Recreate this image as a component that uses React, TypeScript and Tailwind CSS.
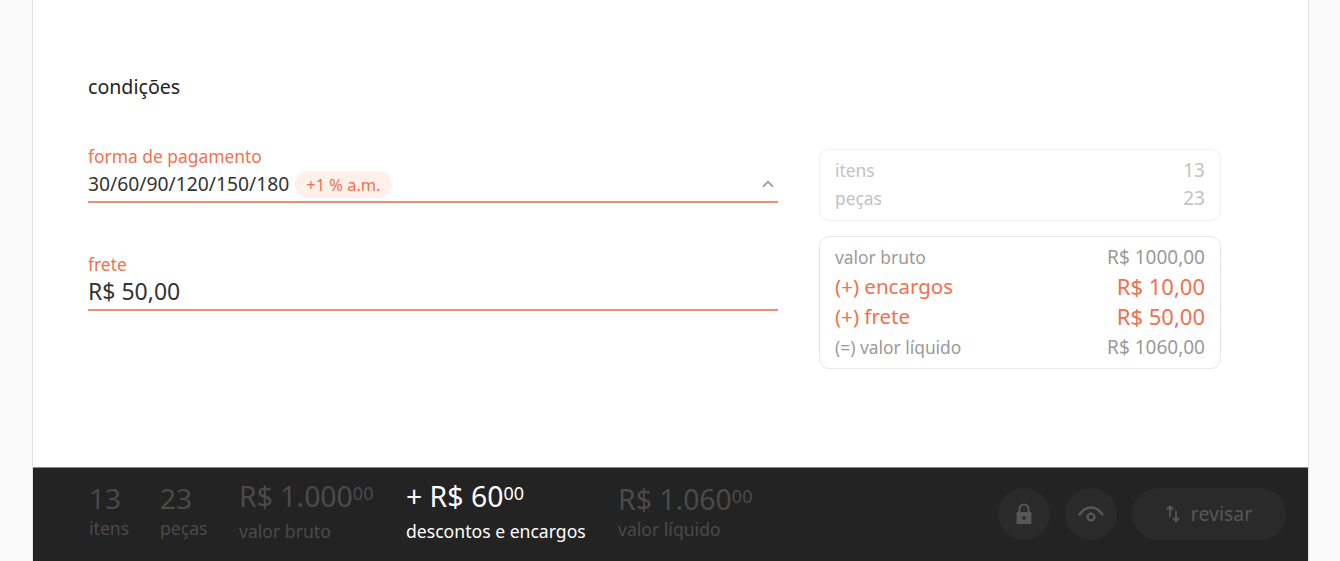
import React from 'react';
import { ChevronUp } from 'lucide-react';

const Lock = () => (
  <svg width="18" height="22" viewBox="0 0 18 22" fill="none">
    <path d="M4.5 10V6a4.5 4.5 0 0 1 9 0v4" stroke="#575757" strokeWidth="2" />
    <path d="M1.5 10a1 1 0 0 1 1-1h13a1 1 0 0 1 1 1v10a1 1 0 0 1-1 1h-13a1 1 0 0 1-1-1z" fill="#575757" />
    <circle cx="9" cy="15" r="1.8" fill="#2a2a2a" />
  </svg>
);

const Eye = () => (
  <svg width="28" height="20" viewBox="0 0 28 20" fill="none">
    <path d="M2.5 10.5C6 5.5 10 3.5 14 3.5s8 2 11.5 7" stroke="#575757" strokeWidth="2.4" strokeLinecap="round" />
    <circle cx="14" cy="13" r="3.4" stroke="#575757" strokeWidth="2.4" />
  </svg>
);

const Swap = () => (
  <svg width="14" height="18" viewBox="0 0 14 18" fill="none" stroke="#575757" strokeWidth="1.8" strokeLinecap="round" strokeLinejoin="round">
    <path d="M4 11V1.5M1.5 4 4 1.5 6.5 4" />
    <path d="M10 6.5V16M7.5 13.5 10 16l2.5-2.5" />
  </svg>
);

const Field = ({ label, children }: { label: string; children: React.ReactNode }) => (
  <div className="border-b-2 border-[#ee8f78] h-[57px]">
    <div className="text-[17.4px] leading-[20px] text-[#f0704f]">{label}</div>
    {children}
  </div>
);

const Row = ({ label, value, className, valueClass }: { label: string; value: string; className: string; valueClass: string }) => (
  <div className={`flex justify-between items-center ${className}`}>
    <span>{label}</span>
    <span className={valueClass}>{value}</span>
  </div>
);

const Stat = ({ value, cents, label, labelClass, bright }: { value: string; cents: string; label: string; labelClass: string; bright?: boolean }) => (
  <div className={bright ? 'text-white' : 'text-[#4a4a4a]'}>
    <div className="text-[28.4px] leading-[38px] whitespace-nowrap">
      {value}
      <span className="text-[18px] leading-none align-[7px]">{cents}</span>
    </div>
    <div className={`text-[17.6px] whitespace-nowrap ${labelClass}`}>{label}</div>
  </div>
);

export default function App() {
  return (
    <div className="h-[561px] w-[1340px] overflow-hidden bg-[#f9f9f9] pl-[32px] pr-[31px] font-['Noto_Sans','Open_Sans',sans-serif]">
      <div className="h-full flex flex-col bg-white border-x border-[#e4e4e4]">
        {/* Form */}
        <div className="h-[467px] pl-[55px] pr-[87px] pt-[73px]">
          <h2 className="text-[19.6px] leading-[28px] text-[#222222]">condições</h2>
          <div className="flex gap-[41px] mt-[36px]">
            <div className="w-[690px] flex flex-col gap-[51px] mt-[9px]">
              <Field label="forma de pagamento">
                <div className="flex items-center h-[28px] mt-[4px] text-[19.3px] text-[#333333]">
                  <span>30/60/90/120/150/180</span>
                  <span className="ml-[6px] h-[27px] px-[11px] rounded-full bg-[#fff0eb] text-[#f0704f] text-[16.4px] leading-[27px]">+1 % a.m.</span>
                  <ChevronUp size={18} strokeWidth={2} className="ml-auto mr-[1px] text-[#8a8a8a]" />
                </div>
              </Field>
              <Field label="frete">
                <div className="h-[28px] mt-[3px] text-[23px] leading-[28px] text-[#333333]">R$ 50,00</div>
              </Field>
            </div>
            <div className="w-[402px] flex flex-col gap-[15px] mt-[12px]">
              <div className="h-[72px] rounded-[10px] border border-[#f0f0f0] px-[15px] py-[6px] text-[17.4px] leading-[28px] text-[#c2c2c2]">
                <Row label="itens" value="13" className="" valueClass="text-[19px]" />
                <Row label="peças" value="23" className="" valueClass="text-[19px]" />
              </div>
              <div className="h-[133px] rounded-[10px] border border-[#e8e8e8] px-[15px] pt-[6px]">
                <Row label="valor bruto" value="R$ 1000,00" className="h-[29px] text-[17.4px] text-[#9a9a9a]" valueClass="text-[19px]" />
                <Row label="(+) encargos" value="R$ 10,00" className="h-[29px] text-[20.5px] text-[#f0704f]" valueClass="text-[22px]" />
                <Row label="(+) frete" value="R$ 50,00" className="h-[31px] text-[20.5px] text-[#f0704f]" valueClass="text-[22px]" />
                <Row label="(=) valor líquido" value="R$ 1060,00" className="h-[31px] text-[17.4px] text-[#9a9a9a]" valueClass="text-[19px]" />
              </div>
            </div>
          </div>
        </div>
        {/* Bottom bar */}
        <div className="flex-1 border-t border-[#8a8a8a] bg-[#232323] flex items-start pl-[56px] pr-[22px] pt-[9px]">
          <div className="flex">
            <div className="w-[71px] text-[#4a4a4a] pt-[2px]">
              <div className="text-[28px] leading-[38px]">13</div>
              <div className="text-[17.6px] leading-[22px]">itens</div>
            </div>
            <div className="w-[79px] text-[#4a4a4a] pt-[2px]">
              <div className="text-[28px] leading-[38px]">23</div>
              <div className="text-[17.6px] leading-[22px]">peças</div>
            </div>
            <div className="w-[167px]"><Stat value="R$ 1.000" cents="00" label="valor bruto" labelClass="leading-[24px] mt-[4px]" /></div>
            <div className="w-[212px]"><Stat value="+ R$ 60" cents="00" label="descontos e encargos" labelClass="leading-[24px] mt-[4px]" bright /></div>
            <div className="pt-[3px]"><Stat value="R$ 1.060" cents="00" label="valor líquido" labelClass="leading-[22px]" /></div>
          </div>
          <div className="ml-auto flex items-center gap-[15px] mt-[11px] text-[#575757]">
            <div className="w-[52px] h-[52px] rounded-full bg-[#2a2a2a] flex items-center justify-center"><Lock /></div>
            <div className="w-[52px] h-[52px] rounded-full bg-[#2a2a2a] flex items-center justify-center"><Eye /></div>
            <div className="w-[154px] h-[52px] rounded-full bg-[#2a2a2a] flex items-center justify-center gap-[11px] text-[19.5px]">
              <Swap />
              <span>revisar</span>
            </div>
          </div>
        </div>
      </div>
    </div>
  );
}
